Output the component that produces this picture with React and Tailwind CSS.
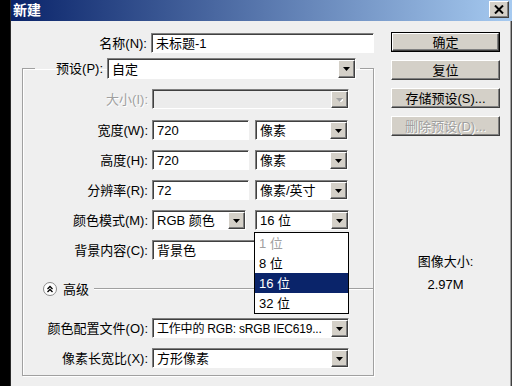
import React from 'react';

const FONT = "font-['Liberation_Sans','Noto_Sans_CJK_SC',sans-serif]";

const Arrow = ({ disabled }) => (
  <div className="w-[17px] h-full shrink-0 flex items-center justify-center bg-[#d4d0c8] border border-t-white border-l-white border-r-[#404040] border-b-[#404040] shadow-[inset_-1px_-1px_0_#808080]">
    <svg width="7" height="4" viewBox="0 0 7 4">
      {disabled ? (
        <>
          <path d="M1 1h7L4.5 5z" fill="#ffffff" />
          <path d="M0 0h7L3.5 4z" fill="#a0a0a0" />
        </>
      ) : (
        <path d="M0 0h7L3.5 4z" fill="#000000" />
      )}
    </svg>
  </div>
);

const Field = ({ value, width, select, disabled, small }) => (
  <div
    className={
      'flex h-[20px] shrink-0 border border-t-[#808080] border-l-[#808080] border-r-white border-b-white shadow-[inset_1px_1px_0_#404040] pl-[1px] pt-[1px] ' +
      (disabled ? 'bg-[#ececec]' : 'bg-white')
    }
    style={{ width }}
  >
    <div
      className={
        'flex-1 flex items-center px-[3px] leading-none text-black whitespace-nowrap overflow-hidden ' +
        (small ? 'text-[12px] tracking-[-0.2px]' : 'text-[13px]')
      }
    >
      {value}
    </div>
    {select && <Arrow disabled={disabled} />}
  </div>
);

const Label = ({ children, w = 'w-[125px]', disabled }) => (
  <div
    className={
      w +
      ' shrink-0 text-right text-[13px] leading-none whitespace-nowrap ' +
      (disabled ? 'text-[#a0a0a0] [text-shadow:1px_1px_0_#fff]' : 'text-black')
    }
  >
    {children}
  </div>
);

const Button = ({ children, primary, disabled }) => (
  <div
    className={
      'w-[109px] h-[20px] ' + (primary ? 'border border-black' : '')
    }
  >
    <div
      className={
        'h-full flex items-center justify-center bg-[#d4d0c8] border border-t-white border-l-white border-r-[#404040] border-b-[#404040] shadow-[inset_-1px_-1px_0_#808080] text-[13px] leading-none ' +
        (disabled ? 'text-[#a0a0a0] [text-shadow:1px_1px_0_#fff]' : 'text-black')
      }
    >
      {children}
    </div>
  </div>
);

const bitOptions = [
  { label: '1 位', disabled: true },
  { label: '8 位' },
  { label: '16 位', active: true },
  { label: '32 位' },
];

export default function App() {
  return (
    <div className={'w-[512px] h-[386px] flex bg-black overflow-hidden ' + FONT}>
      <div className="w-[10px] shrink-0" />
      <div className="flex-1 flex flex-col bg-[#efefef] border-l border-[#2a2a2a] shadow-[inset_-1px_0_0_#404040,inset_-2px_0_0_#a0a0a0]">
        {/* title bar */}
        <div className="h-[21px] shrink-0 flex items-start pl-[2px] pr-[3px] bg-[linear-gradient(to_right,#0a246a,#a6caf0)]">
          <span className="mt-[3px] text-[14px] font-bold text-white leading-none">新建</span>
          <div className="ml-auto mt-[1px] w-[20px] h-[17px] flex items-center justify-center bg-[#d4d0c8] border border-t-white border-l-white border-r-[#404040] border-b-[#404040] shadow-[inset_-1px_-1px_0_#808080]">
            <svg width="10" height="9" viewBox="0 0 10 9">
              <path d="M1 0.5l8 8M9 0.5l-8 8" stroke="#000" strokeWidth="2" />
            </svg>
          </div>
        </div>

        {/* body */}
        <div className="flex pt-[11px]">
          <div className="w-[380px] shrink-0">
            <div className="flex items-center mt-[1px]">
              <Label w="w-[136px]">名称(N):</Label>
              <div className="ml-[4px]">
                <Field value="未标题-1" width={223} />
              </div>
            </div>

            <fieldset className="ml-[11px] mt-[5px] w-[352px] border border-[#a0a0a0] shadow-[inset_1px_1px_0_#fff,1px_1px_0_#fff] pb-[7px]">
              <legend className="ml-[12px] flex items-center pr-[4px]">
                <Label w="w-[68px]">预设(P):</Label>
                <div className="ml-[4px]">
                  <div className="flex h-[21px] w-[249px] border border-t-[#808080] border-l-[#808080] border-r-white border-b-white shadow-[inset_1px_1px_0_#404040] pl-[1px] pt-[1px] bg-white">
                    <div className="flex-1 flex items-center px-[3px] text-[13px] leading-none">自定</div>
                    <Arrow />
                  </div>
                </div>
              </legend>

              <div className="flex items-center mt-[10px]">
                <Label disabled>大小(I):</Label>
                <div className="ml-[4px]">
                  <Field value="" width={197} select disabled />
                </div>
              </div>

              <div className="flex items-center mt-[11px]">
                <Label>宽度(W):</Label>
                <div className="ml-[4px] flex">
                  <Field value="720" width={97} />
                  <div className="ml-[6px]">
                    <Field value="像素" width={93} select />
                  </div>
                </div>
              </div>

              <div className="flex items-center mt-[10px]">
                <Label>高度(H):</Label>
                <div className="ml-[4px] flex">
                  <Field value="720" width={97} />
                  <div className="ml-[6px]">
                    <Field value="像素" width={93} select />
                  </div>
                </div>
              </div>

              <div className="flex items-center mt-[10px]">
                <Label>分辨率(R):</Label>
                <div className="ml-[4px] flex">
                  <Field value="72" width={97} />
                  <div className="ml-[6px]">
                    <Field value="像素/英寸" width={93} select />
                  </div>
                </div>
              </div>

              <div className="flex items-center mt-[10px] relative z-10">
                <Label>颜色模式(M):</Label>
                <div className="ml-[4px] flex">
                  <Field value="RGB 颜色" width={94} select />
                  <div className="ml-[9px] relative">
                    <Field value="16 位" width={94} select />
                    <div className="absolute left-[-1px] top-[22px] w-[95px] bg-white border border-black">
                      {bitOptions.map((o) => (
                        <div
                          key={o.label}
                          className={
                            'h-[20px] flex items-center px-[4px] text-[13px] leading-none ' +
                            (o.active
                              ? 'bg-[#0a246a] text-white'
                              : o.disabled
                              ? 'text-[#a0a0a0]'
                              : 'text-black')
                          }
                        >
                          {o.label}
                        </div>
                      ))}
                    </div>
                  </div>
                </div>
              </div>

              <div className="flex items-center mt-[10px]">
                <Label>背景内容(C):</Label>
                <div className="ml-[4px]">
                  <Field value="背景色" width={197} select />
                </div>
              </div>

              <div className="flex items-center h-[16px] mt-[21px]">
                <div className="ml-[20px]">
                  <svg width="14" height="14" viewBox="0 0 14 14">
                    <circle cx="7" cy="7" r="6.5" fill="#ffffff" stroke="#8a8a8a" />
                    <path d="M4.5 7L7 4.5L9.5 7M4.5 10L7 7.5L9.5 10" fill="none" stroke="#000" strokeWidth="1.3" />
                  </svg>
                </div>
                <span className="ml-[6px] text-[13px] leading-none">高级</span>
                <div className="ml-[5px] flex-1 h-[2px] border-t border-[#a0a0a0] bg-white" />
              </div>

              <div className="flex items-center mt-[21px]">
                <Label>颜色配置文件(O):</Label>
                <div className="ml-[4px]">
                  <Field value="工作中的 RGB: sRGB IEC619..." width={197} select small />
                </div>
              </div>

              <div className="flex items-center mt-[10px]">
                <Label>像素长宽比(X):</Label>
                <div className="ml-[4px]">
                  <Field value="方形像素" width={197} select />
                </div>
              </div>
            </fieldset>
          </div>

          <div className="w-[109px] shrink-0 flex flex-col">
            <Button primary>确定</Button>
            <div className="mt-[8px]">
              <Button>复位</Button>
            </div>
            <div className="mt-[8px]">
              <Button>存储预设(S)...</Button>
            </div>
            <div className="mt-[8px]">
              <Button disabled>删除预设(D)...</Button>
            </div>
            <div className="mt-[117px] text-center text-[13px] leading-[17px] text-black">图像大小:</div>
            <div className="mt-[6px] text-center text-[13px] leading-[17px] text-black">2.97M</div>
          </div>
        </div>
      </div>
    </div>
  );
}
